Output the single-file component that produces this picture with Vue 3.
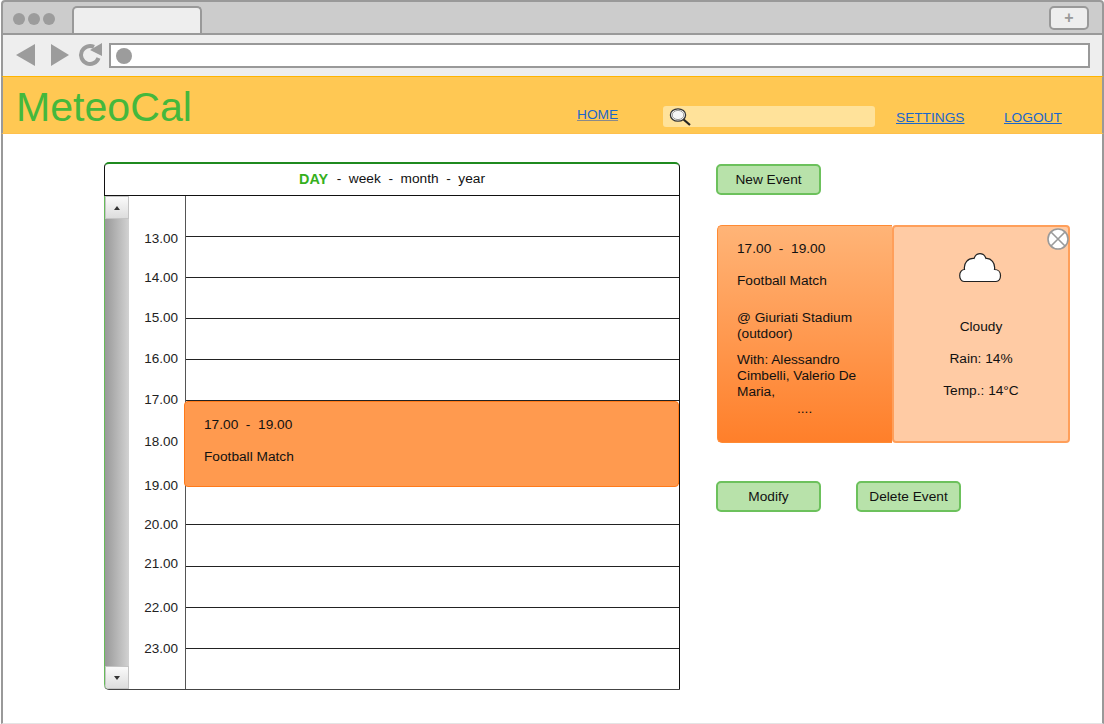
<script setup>
// time labels and grid lines are not evenly spaced in the mockup, so keep the row heights here
const timeRows = [
  { label: "13.00", height: 39 },
  { label: "14.00", height: 40 },
  { label: "15.00", height: 41 },
  { label: "16.00", height: 41 },
  { label: "17.00", height: 42 },
  { label: "18.00", height: 44 },
  { label: "19.00", height: 39 },
  { label: "20.00", height: 39 },
  { label: "21.00", height: 44 },
  { label: "22.00", height: 41 },
  { label: "23.00", height: 41 },
];
const gridRows = [41, 41, 41, 41, 41, 41, 42, 41, 42, 41, 41];
const views = ["week", "month", "year"];
</script>

<template>
  <div class="browser">
    <div class="tabbar">
      <div class="dots"><i></i><i></i><i></i></div>
      <div class="tab"></div>
      <div class="plus">+</div>
    </div>

    <div class="toolbar">
      <svg class="nav-icons" width="104" height="26" viewBox="0 0 104 26">
        <path d="M12 12 L31 1 V23 Z" fill="#9c9c9c" />
        <path d="M47 1 V23 L65 12 Z" fill="#9c9c9c" />
        <path d="M90 3.9 A9 9 0 1 0 94.5 15" fill="none" stroke="#9c9c9c" stroke-width="4" />
        <path d="M98 0 V13 L86 7 Z" fill="#9c9c9c" />
      </svg>
      <div class="urlbar"><span class="url-dot"></span></div>
    </div>

    <header class="topbar">
      <h1 class="logo">MeteoCal</h1>
      <a class="link home" href="#">HOME</a>
      <div class="search">
        <svg width="26" height="20" viewBox="0 0 26 20">
          <path d="M16 12 L23 18" stroke="#222" stroke-width="2.2" />
          <ellipse cx="11" cy="8" rx="7.6" ry="6.2" fill="#fff" stroke="#333" stroke-width="1.3" />
          <ellipse cx="11" cy="8" rx="5.8" ry="4.6" fill="#f6f6f6" stroke="#999" stroke-width="1" />
        </svg>
      </div>
      <a class="link settings" href="#">SETTINGS</a>
      <a class="link logout" href="#">LOGOUT</a>
    </header>

    <main class="content">
      <section class="calendar">
        <div class="views">
          <b>DAY</b>
          <template v-for="v in views" :key="v">
            <span class="sep">-</span><span>{{ v }}</span>
          </template>
        </div>
        <div class="day">
          <div class="scroll">
            <div class="scroll-btn up"></div>
            <div class="scroll-track"></div>
            <div class="scroll-btn down"></div>
          </div>
          <div class="times">
            <div v-for="t in timeRows" :key="t.label" class="time" :style="{ height: t.height + 'px' }">
              {{ t.label }}
            </div>
          </div>
          <div class="grid">
            <div v-for="(h, i) in gridRows" :key="i" class="line" :style="{ height: h + 'px' }"></div>
            <div class="event">
              <div>17.00&nbsp; -&nbsp; 19.00</div>
              <div>Football Match</div>
            </div>
          </div>
        </div>
      </section>

      <aside class="side">
        <button class="btn new">New Event</button>
        <div class="card">
          <div class="details">
            <p class="d-time">17.00&nbsp; -&nbsp; 19.00</p>
            <p class="d-name">Football Match</p>
            <p class="d-place">@ Giuriati Stadium<br />(outdoor)</p>
            <p class="d-with">With: Alessandro<br />Cimbelli, Valerio De<br />Maria,</p>
            <p class="d-more">....</p>
          </div>
          <div class="weather">
            <svg class="cloud" width="44" height="32" viewBox="0 0 44 32">
              <path
                d="M6 29.5 C3 29.5 1.7 26 1.7 23.5 C1.7 20 4 17.5 6.5 17.5 C5.5 11 10 6 16 6.5 C17 3.5 19 1.7 22 1.7 C25 1.7 27 3.5 28 6.5 C33 6 37.5 11 36.5 17.5 C40 17.5 42.5 20 42.5 23.5 C42.5 26.5 41 29.5 38 29.5 Z"
                fill="#fff"
                stroke="#222"
                stroke-width="1.2"
              />
            </svg>
            <p>Cloudy</p>
            <p>Rain: 14%</p>
            <p>Temp.: 14°C</p>
            <svg class="close" width="22" height="22" viewBox="0 0 22 22">
              <circle cx="11" cy="11" r="10" fill="#fff" stroke="#9a9a9a" stroke-width="1.6" />
              <path d="M4 4 L18 18 M18 4 L4 18" stroke="#9a9a9a" stroke-width="1.6" />
            </svg>
          </div>
        </div>
        <div class="actions">
          <button class="btn">Modify</button>
          <button class="btn">Delete Event</button>
        </div>
      </aside>
    </main>
  </div>
</template>

<style>
html,
body {
  margin: 0;
  background: #fff;
}
</style>

<style scoped>
.browser {
  width: 1104px;
  height: 724px;
  box-sizing: border-box;
  padding-left: 1px;
  overflow: hidden;
  background: #fff;
  font-family: "Liberation Sans", Arial, sans-serif;
  color: #111;
  display: flex;
  flex-direction: column;
}

.tabbar {
  height: 35px;
  flex: none;
  box-sizing: border-box;
  border: 2px solid #999;
  border-radius: 4px 4px 0 0;
  background: #ccc;
  display: flex;
  padding-top: 4px;
}

.dots {
  display: flex;
  gap: 3px;
  padding: 7px 0 0 10px;
  width: 58px;
  box-sizing: border-box;
}

.dots i {
  width: 12px;
  height: 12px;
  border-radius: 50%;
  background: #9c9c9c;
}

.tab {
  margin-left: 11px;
  width: 130px;
  box-sizing: border-box;
  height: 27px;
  border: 2px solid #999;
  border-bottom: 0;
  border-radius: 5px 5px 0 0;
  background: #eee;
}

.plus {
  margin-left: auto;
  margin-right: 13px;
  width: 40px;
  height: 24px;
  box-sizing: border-box;
  border: 2px solid #999;
  border-radius: 5px;
  background: #eee;
  color: #999;
  font-size: 16px;
  font-weight: bold;
  line-height: 19px;
  text-align: center;
}

.toolbar {
  height: 41px;
  flex: none;
  box-sizing: border-box;
  border-left: 2px solid #999;
  border-right: 2px solid #999;
  background: #eee;
  display: flex;
  align-items: flex-start;
  padding-top: 8px;
}

.nav-icons {
  flex: none;
  margin-left: 1px;
  margin-right: 1px;
}

.urlbar {
  width: 981px;
  height: 25px;
  box-sizing: border-box;
  border: 2px solid #999;
  background: #fff;
  display: flex;
  align-items: center;
  padding-left: 5px;
}

.url-dot {
  width: 16px;
  height: 16px;
  border-radius: 50%;
  background: #9c9c9c;
}

.topbar {
  height: 58px;
  flex: none;
  box-sizing: border-box;
  border-top: 1px solid #ffb400;
  border-bottom: 1px solid #ffc04d;
  border-left: 2px solid #999;
  border-right: 2px solid #999;
  background: #ffc853;
  display: flex;
  align-items: flex-start;
}

.logo {
  margin: 7px 0 0 13px;
  width: 561px;
  flex: none;
  font-size: 41.1px;
  font-weight: normal;
  line-height: 47px;
  color: #45b83c;
}

.link {
  font-size: 13.7px;
  line-height: 16px;
  color: #1a66cc;
  text-decoration: underline;
}

.home {
  margin-top: 30px;
  width: 86px;
  flex: none;
  text-decoration-color: #8a8a8a;
}

.search {
  width: 212px;
  height: 21px;
  margin-top: 29px;
  flex: none;
  box-sizing: border-box;
  padding: 1px 0 0 4px;
  border-radius: 3px;
  background: #ffe29a;
}

.settings {
  margin: 33px 0 0 21px;
  width: 108px;
  flex: none;
}

.logout {
  margin-top: 33px;
}

.content {
  flex: 1;
  min-height: 0;
  box-sizing: border-box;
  border-left: 2px solid #999;
  border-right: 2px solid #999;
  border-bottom: 1px solid #e4e4e4;
  padding: 28px 0 0 101px;
  display: flex;
  background: #fff;
}

.calendar {
  width: 576px;
  flex: none;
}

.views {
  height: 34px;
  box-sizing: border-box;
  padding-bottom: 2px;
  border: 1px solid #111;
  border-top: 2px solid #1f8a1f;
  border-radius: 5px 5px 0 0;
  display: flex;
  justify-content: center;
  align-items: center;
  font-size: 13.7px;
  gap: 7.6px;
}

.views b {
  color: #35b01c;
  font-size: 14.4px;
  margin-right: 1px;
}

.day {
  height: 494px;
  display: flex;
  box-sizing: border-box;
  border-right: 1px solid #111;
  border-bottom: 1px solid #444;
  border-radius: 0 0 0 5px;
}

.scroll {
  width: 25px;
  flex: none;
  box-sizing: border-box;
  border-left: 1px solid #66bb5a;
  display: flex;
  flex-direction: column;
  border-radius: 0 0 0 5px;
  overflow: hidden;
}

.scroll-track {
  flex: 1;
  background: linear-gradient(to right, #999, #d2d2d2);
}

.scroll-btn {
  height: 23px;
  flex: none;
  box-sizing: border-box;
  background: linear-gradient(#fafafa, #ddd);
  border: 1px solid #c4c4c4;
  display: flex;
  align-items: center;
  justify-content: center;
}

.scroll-btn::after {
  content: "";
  border-left: 3px solid transparent;
  border-right: 3px solid transparent;
}

.up::after {
  border-bottom: 4px solid #333;
}

.down::after {
  border-top: 4px solid #333;
}

.times {
  width: 57px;
  flex: none;
  box-sizing: border-box;
  border-right: 1px solid #555;
  padding-top: 23px;
  overflow: hidden;
}

.time {
  box-sizing: border-box;
  padding: 12px 7px 0 0;
  line-height: 16px;
  font-size: 13.5px;
  color: #222;
  text-align: right;
}

.grid {
  flex: 1;
  position: relative;
}

.line {
  box-sizing: border-box;
  border-bottom: 1px solid #222;
}

.event {
  position: absolute;
  left: -2px;
  right: 0;
  top: 205px;
  height: 86px;
  box-sizing: border-box;
  padding: 15px 19px;
  border: 1px solid #ff7a1a;
  border-radius: 4px;
  background: #ff9a4f;
  font-size: 13.7px;
  line-height: 16px;
}

.event div + div {
  margin-top: 16px;
}

.side {
  margin-left: 36px;
  width: 355px;
  flex: none;
  padding-top: 2px;
}

.btn {
  display: block;
  width: 105px;
  height: 31px;
  padding: 0;
  box-sizing: border-box;
  border: 2px solid #6cc15c;
  border-radius: 5px;
  background: #b8e2aa;
  font: 13.7px "Liberation Sans", Arial, sans-serif;
  color: #111;
}

.card {
  margin: 30px 0 0 1px;
  width: 353px;
  height: 218px;
  display: flex;
  font-size: 13.7px;
  line-height: 16px;
}

.card p {
  margin: 0;
}

.details {
  width: 175px;
  flex: none;
  box-sizing: border-box;
  padding: 15px 0 0 19px;
  border: 1px solid #ff8a33;
  border-right: 0;
  border-radius: 5px 0 0 5px;
  background: linear-gradient(#ffb477, #ff7f2a);
}

.d-name {
  padding-top: 16px;
}

.d-place {
  padding-top: 21px;
}

.d-with {
  padding-top: 10px;
}

.d-more {
  padding: 1px 0 0 60px;
}

.weather {
  flex: 1;
  position: relative;
  box-sizing: border-box;
  border: 2px solid #ff9f5a;
  border-radius: 4px;
  background: #ffcba4;
  display: flex;
  flex-direction: column;
  align-items: center;
  gap: 16px;
  padding-top: 25px;
}

.cloud {
  margin-right: 2px;
  margin-bottom: 19px;
}

.close {
  position: absolute;
  top: 1px;
  right: -1px;
}

.actions {
  margin-top: 38px;
  display: flex;
  gap: 35px;
}
</style>
